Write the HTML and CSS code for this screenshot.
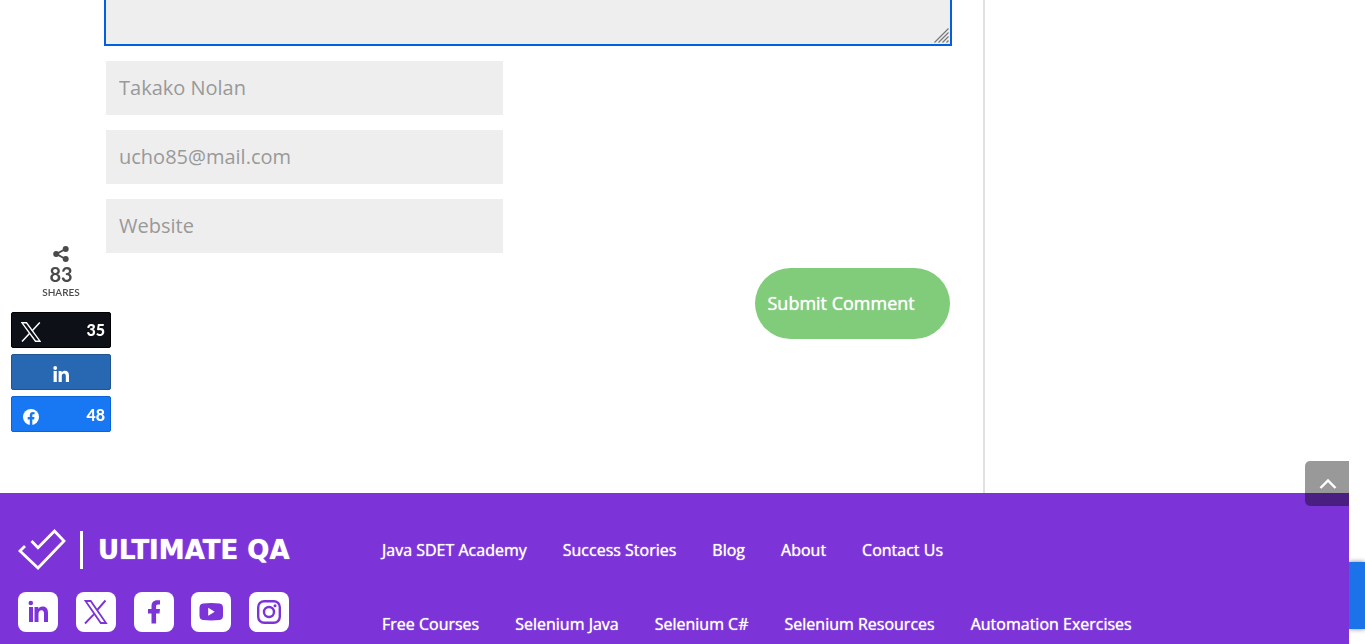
FILE: index.html
```html
<!DOCTYPE html>
<html lang="en">
<head>
<meta charset="utf-8">
<title>Ultimate QA</title>
<link rel="stylesheet" href="styles.css">
</head>
<body>
<div class="page">
  <main class="content">
    <form class="comment-form">
      <div class="comment-box">
        <textarea class="comment-text" aria-label="Comment"></textarea>
        <svg class="grip" width="15" height="15" viewBox="0 0 15 15" aria-hidden="true"><path d="M0.5 14.500L14.500 .5M4.500 14.500L14.500 4.500M8.500 14.500L14.500 8.500M12.500 14.500L14.500 12.500" stroke="#777" stroke-width="1.200"/></svg>
      </div>
      <input class="field" type="text" value="Takako Nolan" aria-label="Name">
      <input class="field" type="email" value="ucho85@mail.com" aria-label="Email">
      <input class="field" type="url" placeholder="Website" aria-label="Website">
      <button class="submit" type="button">Submit Comment</button>
    </form>
  </main>
  <footer class="footer">
    <div class="brand">
      <a class="logo" href="#">
        <svg width="48" height="42" viewBox="0 0 48 42" fill="none" stroke="#fff" stroke-width="2.800" aria-hidden="true"><path d="M7 17L2 22L20 39L46 12L36.500 2L20 18.800L13.500 12"/></svg>
        <span class="logo-bar"></span>
        <span class="logo-name">ULTIMATE QA</span>
      </a>
      <div class="socials">
        <a class="social" href="#" aria-label="LinkedIn"><svg width="40" height="40" viewBox="0 0 40 40" fill="#7c34d9"><circle cx="12.800" cy="11" r="2.300"/><path d="M11 15h4v15h-4zM16.500 15h3.800v2c1-1.600 2.500-2.400 4.300-2.400 3.800 0 5.400 2.200 5.400 6.400v9h-4v-8.200c0-2.300-.7-3.600-2.400-3.600-2 0-3.100 1.400-3.100 3.700V30h-4z"/></svg></a>
        <a class="social" href="#" aria-label="X"><svg width="40" height="40" viewBox="0 0 40 40" fill="none" stroke="#7c34d9"><path d="M9.500 9h5.200L30 31h-5.200z" stroke-width="1.800"/><path d="M29.500 8.500L21.200 18M18.300 21.800L9 31.500" stroke-width="1.900"/></svg></a>
        <a class="social" href="#" aria-label="Facebook"><svg width="40" height="40" viewBox="0 0 40 40" fill="#7c34d9"><path d="M17.500 31.500V21.500H14V17h3.500v-2.500c0-4.100 2-6.200 5.800-6.200H26v4.300h-2c-1.300 0-1.900.7-1.900 1.900V17H26l-.5 4.500h-3.400v10z"/></svg></a>
        <a class="social" href="#" aria-label="YouTube"><svg width="40" height="40" viewBox="0 0 40 40"><path d="M12 11.500q8-.8 16.500 0q3.500.4 3.500 4.500v7.500q0 4-3.500 4.500q-8.500.8-16.500 0q-3.500-.5-3.500-4.500V16q0-4.100 3.500-4.500z" fill="#7c34d9"/><path d="M17.200 15.800v8l6.500-4z" fill="#fff"/></svg></a>
        <a class="social" href="#" aria-label="Instagram"><svg width="40" height="40" viewBox="0 0 40 40" fill="none" stroke="#7c34d9" stroke-width="2.400"><rect x="9.200" y="9.200" width="21.600" height="21.600" rx="6"/><circle cx="20" cy="20" r="5" stroke-width="2.400"/><circle cx="26" cy="13.800" r="1.500" fill="#7c34d9" stroke="none"/></svg></a>
      </div>
    </div>
    <nav class="links">
      <div class="link-row">
        <a href="#">Java SDET Academy</a><a href="#">Success Stories</a><a href="#">Blog</a><a href="#">About</a><a href="#">Contact Us</a>
      </div>
      <div class="link-row">
        <a href="#">Free Courses</a><a href="#">Selenium Java</a><a href="#">Selenium C#</a><a href="#">Selenium Resources</a><a href="#">Automation Exercises</a>
      </div>
    </nav>
  </footer>
</div>
<div class="chat-tab"></div>
<aside class="share">
  <div class="share-total">
    <svg width="16" height="16" viewBox="0 0 16 16" fill="#4a4a4a" aria-hidden="true"><path d="M12.500 3L3.500 8l9 5" fill="none" stroke="#4a4a4a" stroke-width="2"/><circle cx="12.700" cy="3" r="3"/><circle cx="3.200" cy="8" r="3"/><circle cx="12.700" cy="13" r="3"/></svg>
    <span class="share-count">83</span>
    <span class="share-label">SHARES</span>
  </div>
  <a class="share-btn share-x" href="#" aria-label="Share on X, 35"><svg width="20" height="20" viewBox="0 0 20 20" fill="none" stroke="#fff"><path d="M1 .8h4.500L19 19.200h-4.500z" stroke-width="1.400"/><path d="M18.800.5L11 9M8.500 11.500L1 19.500" stroke-width="1.500"/></svg><span>35</span></a>
  <a class="share-btn share-in" href="#" aria-label="Share on LinkedIn"><svg width="16" height="16" viewBox="0 0 16 16" fill="#fff"><circle cx="2.200" cy="2" r="1.900"/><path d="M.6 5h3.200v11H.6zM5.600 5h3v1.500c.8-1.200 2-1.800 3.300-1.800 2.800 0 4.100 1.700 4.100 4.700V16h-3.200v-6c0-1.700-.6-2.600-1.800-2.600-1.400 0-2.200 1-2.200 2.700V16H5.600z"/></svg></a>
  <a class="share-btn share-fb" href="#" aria-label="Share on Facebook, 48"><svg width="20" height="16" viewBox="0 0 20 16"><circle cx="10" cy="8" r="8" fill="#fff"/><path d="M8.800 16v-5.600H6.700V8h2.100V6.200c0-2 1.200-3.200 3.100-3.200l1.700.2v2h-1c-1 0-1.300.6-1.300 1.200V8h2.200l-.4 2.400h-1.800V16z" fill="#1877f2"/></svg><span>48</span></a>
</aside>
<button class="to-top" type="button" aria-label="Back to top"><svg width="18" height="12" viewBox="0 0 18 12" fill="none" stroke="#fff" stroke-width="2.400"><path d="M1.500 10L9 2.500l7.500 7.500"/></svg></button>
</body>
</html>
```
FILE: styles.css
```css
* {
  box-sizing: border-box;
}

body {
  margin: 0;
  padding-right: 16px;
  background: #fff;
  font-family: "Open Sans", "Noto Sans", sans-serif;
  overflow: hidden;
}

a {
  color: inherit;
  text-decoration: none;
}

svg {
  display: block;
  flex: none;
}

.page {
  display: flex;
  flex-direction: column;
  min-height: 100vh;
}

.content {
  width: 73%;
  padding: 0 33px 154px 106px;
  border-right: 2px solid #e2e2e2;
}

.comment-form {
  display: flex;
  flex-direction: column;
  align-items: flex-start;
  gap: 15px;
}

.comment-box {
  position: relative;
  align-self: stretch;
  margin-bottom: 2px;
}

.comment-text {
  display: block;
  width: 100%;
  height: 44px;
  border: 0;
  background: #eee;
  outline: 2px solid #0060df;
  resize: none;
}

.grip {
  position: absolute;
  right: 1px;
  bottom: 1px;
}

.field {
  width: 47%;
  height: 54px;
  padding: 0 13px 2px;
  border: 0;
  background: #eee;
  color: #999;
  font: 400 20px "Open Sans", sans-serif;
}

.field::placeholder {
  color: #999;
  opacity: 1;
}

.submit {
  align-self: flex-end;
  height: 71px;
  padding: 0 35px 2px 12px;
  border: 0;
  border-radius: 36px;
  background: #81cc7b;
  color: #fff;
  font: 500 18px "Open Sans", sans-serif;
  text-shadow: 0 0 1px #fff;
}

.footer {
  display: flex;
  flex: 1;
  gap: 93px;
  padding: 36px 18px 12px;
  background: #7c34d9;
  color: #fff;
}

.brand {
  display: flex;
  flex-direction: column;
  gap: 21px;
  width: 271px;
}

.logo {
  display: flex;
  align-items: center;
  height: 42px;
}

.logo-bar {
  flex: none;
  width: 3px;
  height: 38px;
  margin: 0 15px 0 14px;
  background: #fff;
}

.logo-name {
  font: 700 26px/40px "DejaVu Sans", sans-serif;
  text-shadow: 0 0 1px #fff;
  white-space: nowrap;
}

.socials {
  display: flex;
  justify-content: space-between;
}

.social {
  width: 40px;
  height: 40px;
  border-radius: 8px;
  background: #fff;
}

.links {
  display: flex;
  flex-direction: column;
  gap: 50px;
  padding-top: 9px;
}

.link-row {
  display: flex;
  gap: 36px;
  font-size: 16px;
  font-weight: 500;
  line-height: 24px;
  text-shadow: 0 0 1px #fff;
  white-space: nowrap;
}

.chat-tab {
  position: fixed;
  right: 0;
  bottom: 15px;
  width: 16px;
  height: 67px;
  background: #1a73e8;
  box-shadow: 0 0 5px #808080;
  clip-path: inset(-8px 0);
}

.share {
  position: fixed;
  top: 246px;
  left: 11px;
  display: flex;
  flex-direction: column;
  gap: 6px;
  width: 100px;
  font-family: Lato, sans-serif;
}

.share-total {
  display: flex;
  flex-direction: column;
  align-items: center;
  margin-bottom: 8px;
  color: #4a4a4a;
}

.share-count {
  font-size: 20px;
  font-weight: 700;
  line-height: 24px;
}

.share-label {
  font-size: 10px;
  font-weight: 600;
  line-height: 12px;
}

.share-btn {
  display: flex;
  align-items: center;
  justify-content: space-between;
  height: 36px;
  padding: 3px 5px 0 9px;
  border: 1px solid;
  border-radius: 2px;
  color: #fff;
  font-size: 16px;
  font-weight: 900;
  line-height: 20px;
}

.share-btn span {
  padding-bottom: 3px;
}

.share-x {
  border-color: #000;
  background: #0d1117;
}

.share-in {
  justify-content: center;
  padding: 3px 1px 0 0;
  border-color: #1f5490;
  background: #2867b2;
}

.share-fb {
  padding-top: 5px;
  border-color: #0c63d4;
  background: #1877f2;
}

.to-top {
  position: fixed;
  right: 16px;
  bottom: 138px;
  display: flex;
  align-items: center;
  justify-content: center;
  width: 44px;
  height: 45px;
  padding: 0 0 0 2px;
  border: 0;
  border-radius: 5px 0 0 5px;
  background: rgba(0, 0, 0, 0.4);
}
```
